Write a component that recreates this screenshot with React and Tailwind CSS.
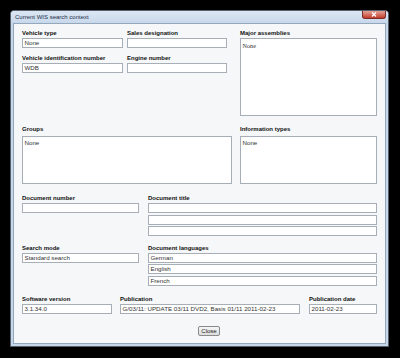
import React from "react";

const font = { fontFamily: '"Liberation Sans", Arial, sans-serif' };

function Label({ children, className = "" }) {
  return (
    <div className={"h-[8px] leading-[8px] text-[6px] font-bold text-[#111] whitespace-nowrap " + className}>
      {children}
    </div>
  );
}

function Field({ children, className = "" }) {
  return (
    <div
      className={
        "h-[10px] border border-[#a7aeb7] bg-white pl-[1.5px] text-[6.2px] leading-[8px] text-[#333] whitespace-nowrap overflow-hidden " +
        className
      }
    >
      {children}
    </div>
  );
}

function Box({ children, className = "", serif = false }) {
  return (
    <div
      className={
        "border border-[#a7aeb7] bg-white pl-[1.5px] pt-[1.5px] text-[6.2px] leading-[8px] text-[#333] " +
        className
      }
      style={serif ? { fontFamily: '"Liberation Serif", serif' } : undefined}
    >
      {children}
    </div>
  );
}

function App() {
  return (
    <div className="w-[400px] h-[358px] bg-black pt-[10px] pl-[10px]" style={font}>
      <div className="w-[379px] h-[337px] flex flex-col border border-[#56606c] rounded-t-[4px] bg-[#c6d7ea] px-[2px] pb-[2px]">
        {/* title bar */}
        <div className="h-[12px] flex justify-between bg-gradient-to-b from-[#dce7f3] to-[#c8d8eb] -mx-[2px] px-[2px] rounded-t-[3px]">
          <div className="pl-[2px] leading-[12px] text-[6px] text-[#1d2f48]">Current WIS search context</div>
          <div className="w-[24px] h-[8px] flex items-center justify-center rounded-b-[3px] border border-t-0 border-[#7c2c22] bg-gradient-to-b from-[#e3a196] to-[#c13a2b]">
            <svg width="6" height="5" viewBox="0 0 6 5">
              <path d="M1 0.5 L5 4.5 M5 0.5 L1 4.5" stroke="#fff" strokeWidth="1.2" />
            </svg>
          </div>
        </div>

        {/* content */}
        <div className="flex-1 border border-[#93a7bd] bg-[#f5f7f9] pl-[8px] pt-[5px]">
          {/* row 1 */}
          <div className="flex">
            <div className="w-[101px]">
              <Label>Vehicle type</Label>
              <Field className="mt-[1px]">None</Field>
              <Label className="mt-[6px]">Vehicle identification number</Label>
              <Field className="mt-[1px]">WDB</Field>
            </div>
            <div className="w-[100px] ml-[4px]">
              <Label>Sales designation</Label>
              <Field className="mt-[1px]"></Field>
              <Label className="mt-[6px]">Engine number</Label>
              <Field className="mt-[1px]"></Field>
            </div>
            <div className="w-[137px] ml-[13px]">
              <Label>Major assemblies</Label>
              <Box serif className="mt-[1px] h-[78px] pt-[2.5px]">None</Box>
            </div>
          </div>

          {/* row 2 */}
          <div className="flex mt-[9px]">
            <div className="w-[210px]">
              <Label>Groups</Label>
              <Box className="mt-[3px] h-[48px]">None</Box>
            </div>
            <div className="w-[137px] ml-[8px]">
              <Label>Information types</Label>
              <Box className="mt-[3px] h-[48px]">None</Box>
            </div>
          </div>

          {/* row 3 */}
          <div className="flex mt-[10px]">
            <div className="w-[117px]">
              <Label>Document number</Label>
              <Field className="mt-[1px]"></Field>
            </div>
            <div className="w-[229px] ml-[9px] flex flex-col">
              <Label>Document title</Label>
              <div className="mt-[1px] flex flex-col gap-[1.5px]">
                <Field></Field>
                <Field></Field>
                <Field></Field>
              </div>
            </div>
          </div>

          {/* row 4 */}
          <div className="flex mt-[7.5px]">
            <div className="w-[117px]">
              <Label>Search mode</Label>
              <Field className="mt-[1px]">Standard search</Field>
            </div>
            <div className="w-[229px] ml-[9px] flex flex-col">
              <Label>Document languages</Label>
              <div className="mt-[1px] flex flex-col gap-[1.5px]">
                <Field>German</Field>
                <Field>English</Field>
                <Field>French</Field>
              </div>
            </div>
          </div>

          {/* row 5 */}
          <div className="flex mt-[9px]">
            <div className="w-[90px]">
              <Label>Software version</Label>
              <Field className="mt-[1.5px]">3.1.34.0</Field>
            </div>
            <div className="w-[180px] ml-[8px]">
              <Label>Publication</Label>
              <Field className="mt-[1.5px]">G/03/11: UPDATE 03/11 DVD2, Basis 01/11 2011-02-23</Field>
            </div>
            <div className="w-[68px] ml-[9px]">
              <Label>Publication date</Label>
              <Field className="mt-[1.5px]">2011-02-23</Field>
            </div>
          </div>

          {/* close */}
          <div className="flex pl-[176px] mt-[12px]">
            <div className="w-[22px] h-[9.5px] flex items-center justify-center rounded-[2px] border border-[#8a8a8a] bg-gradient-to-b from-[#f6f6f6] to-[#dcdcdc] text-[6px] leading-[8px] text-[#222]">
              Close
            </div>
          </div>
        </div>
      </div>
    </div>
  );
}

export default App;
